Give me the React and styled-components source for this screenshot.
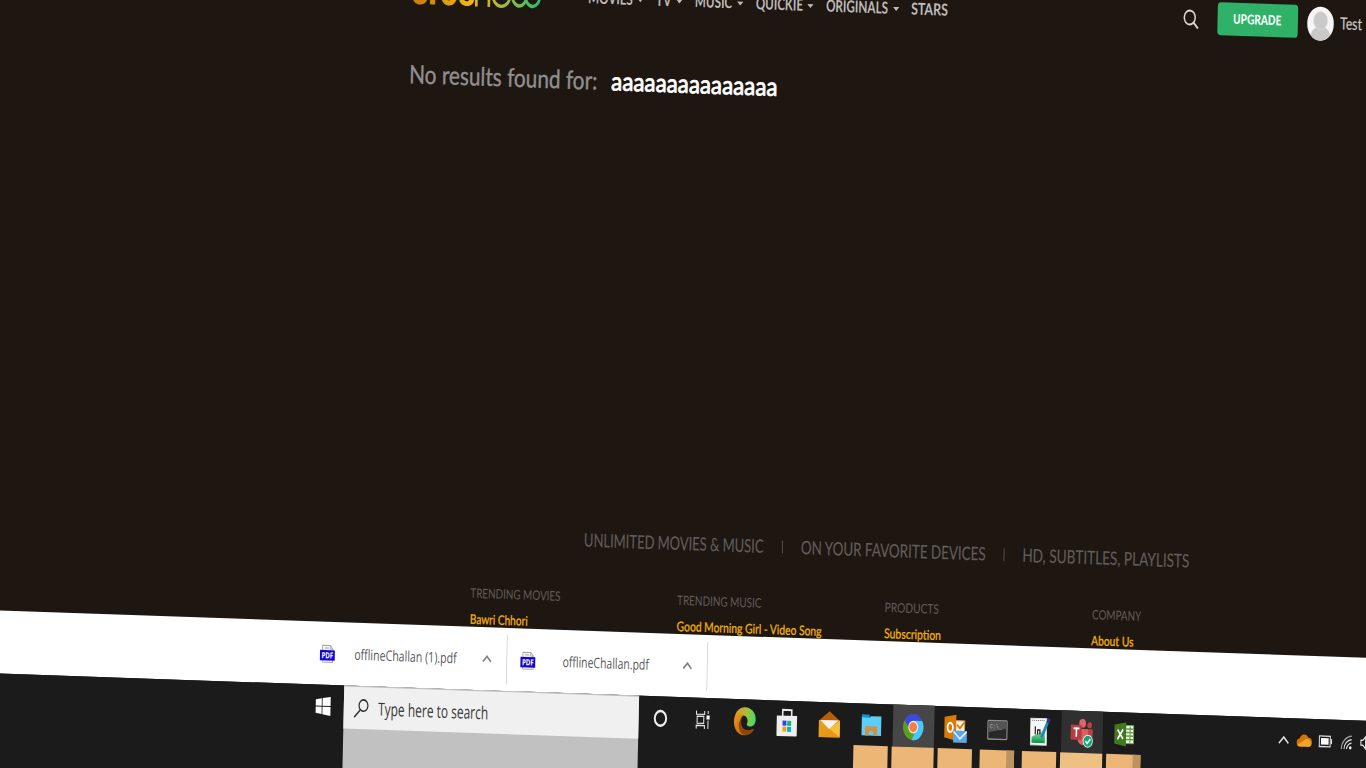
import React, { useLayoutEffect, useRef, useState } from "react";
import styled, { createGlobalStyle } from "styled-components";

const Global = createGlobalStyle`
  html, body { margin: 0; padding: 0; width: 100%; height: 100%; overflow: hidden; background: #1e1611; }
  svg { display: block; flex: none; overflow: visible; }
`;

const Viewport = styled.div`
  width: 1366px;
  height: 768px;
  overflow: hidden;
  background: #1e1611;
`;

const Screen = styled.div`
  width: 1830px;
  height: 850px;
  display: flex;
  flex-direction: column;
  transform-origin: 0 0;
  transform: matrix(0.78, 0.027, -0.022, 1, -18.68, -60.69);
  font-family: Lato, "Liberation Sans", sans-serif;
`;

const Page = styled.main`
  height: 670px;
  flex: none;
  display: flex;
  flex-direction: column;
  overflow: hidden;
  background: #1e1611;
`;

const TextBox = styled.span`
  display: block;
  flex: none;
  width: ${(p) => p.$w}px;
  margin-left: ${(p) => p.$gap || 0}px;
  white-space: nowrap;
`;

const TextRun = styled.span`
  display: inline-block;
  transform-origin: 0 50%;
`;

/* Keeps a label to its column width whatever the installed font measures. */
function Fit({ w, gap, children }) {
  const ref = useRef(null);
  const [scale, setScale] = useState(1);
  useLayoutEffect(() => {
    setScale(w / ref.current.offsetWidth);
  }, [w]);
  return (
    <TextBox $w={w} $gap={gap}>
      <TextRun ref={ref} style={{ transform: `scaleX(${scale})` }}>
        {children}
      </TextRun>
    </TextBox>
  );
}

const Header = styled.header`
  height: 75px;
  flex: none;
  display: flex;
  align-items: center;
  padding-left: 552px;
`;

const Nav = styled.nav`
  display: flex;
  align-items: center;
  width: 763px;
  margin-left: 60px;
  padding-bottom: 2px;
  box-sizing: border-box;
  font-size: 16.5px;
  line-height: 24px;
  font-weight: 700;
  color: #bdbab8;
`;

const Caret = styled.i`
  flex: none;
  margin-left: ${(p) => p.$gap}px;
  margin-top: 2px;
  border: 4px solid transparent;
  border-top-color: #bdbab8;
  border-bottom: 0;
`;

const Upgrade = styled.button`
  display: flex;
  align-items: center;
  justify-content: center;
  width: 103px;
  height: 33.5px;
  margin: -2px 0 0 23.5px;
  padding: 0 0 2px;
  box-sizing: border-box;
  border: 0;
  border-radius: 4px;
  background: #2fb168;
  color: #f4fff8;
  font: 900 13.5px Lato, sans-serif;
`;

const Avatar = styled.div`
  width: 33.5px;
  height: 33.5px;
  margin: 1px 0 0 12.5px;
  border-radius: 50%;
  overflow: hidden;
  background: #f5f5f5;
`;

const UserName = styled.div`
  margin: -1px 0 0 8px;
  font-size: 16.5px;
  color: #c9c6c4;
  -webkit-text-stroke: 0.2px #c9c6c4;
`;

const Results = styled.h1`
  display: flex;
  align-items: center;
  height: 92px;
  margin: 0;
  padding: 0 0 4px 552px;
  box-sizing: border-box;
  font-size: 25.5px;
  line-height: 30px;
  font-weight: 400;
  color: #918f8e;
  -webkit-text-stroke: 0.4px #918f8e;
`;

const Query = styled.span`
  display: block;
  margin-left: 18px;
  color: #fff;
  -webkit-text-stroke: 0.8px #fff;
`;

const Tagline = styled.div`
  display: flex;
  align-items: center;
  height: 40px;
  margin-top: auto;
  padding: 0 0 3px 789px;
  box-sizing: border-box;
  font-size: 18.5px;
  color: #615d5a;
  -webkit-text-stroke: 0.15px #615d5a;
`;

const Bar = styled.i`
  width: 1.5px;
  height: 13px;
  margin-left: ${(p) => p.$gap}px;
  background: #615d5a;
`;

const Columns = styled.div`
  display: grid;
  grid-template-columns: repeat(4, 265.7px);
  height: 47.5px;
  margin-top: 22px;
  padding-left: 644.5px;
  font-size: 13.2px;
`;

const Column = styled.div`
  line-height: 26px;
  color: #615d5a;
`;

const ColumnLink = styled.a`
  display: block;
  color: #f2b10a;
  -webkit-text-stroke: 0.3px #f2b10a;
`;

const Downloads = styled.section`
  display: flex;
  align-items: center;
  height: 63px;
  flex: none;
  padding-left: 437px;
  background: #fff;
  font-family: "Open Sans", "Noto Sans", sans-serif;
  font-size: 14.5px;
  line-height: 24px;
  color: #59595b;
`;

const Download = styled.div`
  display: flex;
  align-items: center;
  box-sizing: border-box;
  width: 257px;
  height: 49px;
  padding-left: 17px;
  border-right: 1.3px solid #cfcfcf;
  & > svg:last-child { margin-left: auto; margin-right: 19px; }
`;

const Taskbar = styled.footer`
  display: flex;
  flex: 1;
  background: #1b1b1b;
`;

const Start = styled.div`
  display: flex;
  align-items: center;
  justify-content: center;
  width: 54px;
  height: 43px;
  margin-left: 432px;
`;

const SearchColumn = styled.div`
  width: 378px;
  background: #c1c1c1;
`;

const SearchBox = styled.div`
  display: flex;
  align-items: center;
  height: 43px;
  box-sizing: border-box;
  padding-left: 13px;
  border-top: 1px solid #bdbdbd;
  background: #f0f0f0;
  font-family: "Open Sans", "Noto Sans", sans-serif;
  font-size: 18px;
  color: #383838;
`;

const Apps = styled.div`
  display: flex;
  margin-left: 1px;
`;

const AppSlot = styled.div`
  width: 54px;
  display: flex;
  flex-direction: column;
  align-items: center;
`;

const AppTile = styled.div`
  display: flex;
  align-items: center;
  justify-content: center;
  width: 53px;
  height: 42px;
  padding-top: 1px;
  box-sizing: border-box;
  background: ${(p) => p.$bg || "transparent"};
`;

const AppBar = styled.div`
  width: ${(p) => (p.$full ? 53.5 : 44.5)}px;
  flex: 1;
  box-sizing: border-box;
  background: ${(p) => p.$bg || "#ebb676"};
  border-right: ${(p) => (p.$stacked ? "10px solid #bd945f" : "0")};
`;

const Tray = styled.div`
  display: flex;
  align-items: center;
  height: 44px;
  margin-left: 164px;
`;

const TrayItem = styled.div`
  width: 27px;
  display: flex;
  justify-content: center;
`;

const Logo = () => (
  <svg width="167" height="50" viewBox="0 0 167 50">
    <defs>
      <linearGradient id="brand" gradientUnits="userSpaceOnUse" x1="0" y1="0" x2="167" y2="0">
        <stop offset="0" stopColor="#c87a08" />
        <stop offset=".45" stopColor="#edb51c" />
        <stop offset=".7" stopColor="#a6b83c" />
        <stop offset="1" stopColor="#27bd75" />
      </linearGradient>
    </defs>
    <g fill="url(#brand)" fontFamily="Inter, sans-serif">
      <text x="0" y="36.5" fontSize="38" fontWeight="800" textLength="82" lengthAdjust="spacingAndGlyphs">eros</text>
    </g>
    <g fill="none" stroke="url(#brand)" strokeWidth="3.4">
      <path d="M84 37V23q0-8 8-8t8 8v14" />
      <circle cx="116" cy="25" r="11" />
      <path d="M130 15v10a9 10 0 0 0 18 0V15M147 15v10a9 10 0 0 0 18 0V15" />
    </g>
  </svg>
);

const SearchIcon = () => (
  <svg width="20" height="20" viewBox="0 0 20 20" fill="none" stroke="#d8d6d4" strokeWidth="1.9">
    <circle cx="8.3" cy="8.3" r="7" />
    <path d="M13.2 13.2 19 19" strokeWidth="2.3" />
  </svg>
);

const Person = () => (
  <svg width="34" height="34" viewBox="0 0 34 34" fill="#c9c9c9">
    <path d="M4 34c0-9 5-13 9-13h8c5 0 9 4 9 13z" />
    <circle cx="17" cy="14" r="9" stroke="#dedede" strokeWidth=".8" />
  </svg>
);

const PdfIcon = () => (
  <svg width="19" height="18" viewBox="0 0 19 18">
    <path d="M3 .6h10l3.5 3.5v13.3H3z" fill="#f4f4f4" stroke="#a6a6a6" />
    <path d="M13 .6v3.6h3.5M6 3.2h5" fill="none" stroke="#a6a6a6" />
    <path d="M0 5.3h19v10.4H0z" fill="#1505d2" />
    <text x="2" y="13.6" fontFamily="Open Sans" fontSize="8.5" fontWeight="700" fill="#fff" textLength="15" lengthAdjust="spacingAndGlyphs">PDF</text>
  </svg>
);

const Chevron = ({ w = 12, h = 7, color = "#858585", sw = 2 }) => (
  <svg width={w} height={h} viewBox="0 0 12 7" fill="none" stroke={color} strokeWidth={sw} preserveAspectRatio="none">
    <path d="m.8 6.4 5.2-5.4 5.2 5.4" />
  </svg>
);

const WindowsIcon = () => (
  <svg width="19" height="19" viewBox="0 0 19 19" fill="#fff">
    <path d="M0 2.7 7.7 1.6V9H0zM8.7 1.4 19 0v9H8.7zM0 10h7.7v7.4L0 16.3zM8.7 10H19v9L8.7 17.6z" />
  </svg>
);

const TaskSearchIcon = () => (
  <svg width="19" height="19" viewBox="0 0 19 19" fill="none" stroke="#2c2c2c" strokeWidth="1.6">
    <circle cx="12.2" cy="6.5" r="5.7" />
    <path d="M8.2 10.8.6 18.4" />
  </svg>
);

const CortanaIcon = () => (
  <svg width="18" height="18" viewBox="0 0 18 18">
    <circle cx="9" cy="9" r="7.3" fill="none" stroke="#ededed" strokeWidth="2.5" />
  </svg>
);

const TaskViewIcon = () => (
  <svg width="19" height="18" viewBox="0 0 19 18" fill="none" stroke="#e6e6e6" strokeWidth="1.3">
    <path d="M1 0v3.4h10.5V0M2 5.5h8.5v7H2zM1 18v-3.4h10.5V18M16 0v3M16 9.5V18" />
    <path d="M14 4.5h4v4h-4z" fill="#fff" stroke="none" />
  </svg>
);

const EdgeIcon = () => (
  <svg width="28" height="28" viewBox="0 0 28 28">
    <defs>
      <linearGradient id="edgeTop" x1="0" x2="1" y1=".3" y2=".5">
        <stop offset="0" stopColor="#f08b20" />
        <stop offset=".5" stopColor="#a8bf35" />
        <stop offset="1" stopColor="#48dc66" />
      </linearGradient>
      <linearGradient id="edgeBase" x1="0" x2="1" y1="0" y2="1">
        <stop offset="0" stopColor="#ef9420" />
        <stop offset="1" stopColor="#b75c04" />
      </linearGradient>
    </defs>
    <path d="M.5 12C2 4 7 0 14 0c8 0 14 5 14 11.500 0 5-3 7.500-7 7.500-3 0-5-1.500-4-3 2-3 0-7-5-8C7 7 3 9 .5 12z" fill="url(#edgeTop)" />
    <path d="M.4 12C3 6 9 5.500 13 8c-3 1-5 4-4 8 1 5 6 8 11 7 3-.5 4.500-2 5.500-1.500C23 26 19 28 14 28 5 28-1 21 .4 12z" fill="url(#edgeBase)" />
    <path d="M11 10c-3 4-2 10 3 12 4 2 8 1 11-.5 1 0 1 1 0 2-4 5-10 5-14 3-6-4-6-13 0-16.500z" fill="#8c4707" />
  </svg>
);

const StoreIcon = () => (
  <svg width="26" height="28" viewBox="0 0 26 28">
    <path d="M7.500 9V1.200h11.500V9" fill="none" stroke="#e8e8e8" strokeWidth="2" />
    <path d="M0 7h26v19.500q0 1-1 1H1q-1 0-1-1z" fill="#eee" />
    <path d="M7.500 12h5v5h-5z" fill="#2849e5" />
    <path d="M13.500 12h5v5h-5z" fill="#13b57c" />
    <path d="M7.500 18h5v5h-5z" fill="#f2a40c" />
    <path d="M13.500 18h5v5h-5z" fill="#0aa7f3" />
  </svg>
);

const MailIcon = () => (
  <svg width="27" height="26" viewBox="0 0 27 26">
    <path d="M0 9.500 13.500 0 27 9.500z" fill="#b65e07" />
    <path d="M0 9h27v17H0z" fill="#e89b1e" />
    <path d="M2 9h23l-11.500 9z" fill="#f3f3f3" />
    <path d="M27 9.500V26L13.500 17.500z" fill="#f7bf3d" />
    <path d="M0 26 13.500 17.500 27 26z" fill="#e59a17" />
  </svg>
);

const FolderIcon = () => (
  <svg width="25" height="21" viewBox="0 0 25 21">
    <path d="M0 0h10v4H0z" fill="#0b97cf" />
    <path d="M0 3h10l1.500-1.500H25V21H0z" fill="#5dcdf9" />
    <path d="M4.500 21v-9.500H20V21h-5v-4.500H9.500V21z" fill="#d6913f" />
  </svg>
);

const ChromeIcon = () => (
  <svg width="26" height="26" viewBox="0 0 26 26">
    <circle cx="13" cy="13" r="13" fill="#5b9f1f" />
    <path d="M1.700 6.500A13 13 0 0 1 24.300 6.500L18 13H7z" fill="#3f48dd" />
    <path d="M24.300 6.500A13 13 0 0 1 11.500 26l6-12-3-7.500z" fill="#49c8ff" />
    <circle cx="13" cy="13" r="6.300" fill="#e9eef5" />
    <circle cx="13" cy="13" r="5" fill="#fa7c41" />
  </svg>
);

const OutlookIcon = () => (
  <svg width="29" height="28" viewBox="0 0 29 28">
    <path d="M14 6h12v13H14z" fill="#f7efe2" stroke="#e19325" />
    <path d="m16 10 4 3.500L26 7" fill="none" stroke="#d67b0a" strokeWidth="2" />
    <path d="M0 2.500 15 0v26L0 23z" fill="#d97a04" />
    <ellipse cx="7.500" cy="13" rx="3.400" ry="4.500" fill="none" stroke="#fff" strokeWidth="2.200" />
    <path d="M11.500 16H29v12H11.500z" fill="#5da5e5" />
    <path d="m12 17 8.200 7 8.300-7" fill="none" stroke="#e5f2fc" strokeWidth="1.700" />
  </svg>
);

const TerminalIcon = () => (
  <svg width="26" height="20" viewBox="0 0 26 20">
    <rect x=".7" y=".7" width="24.600" height="18.600" rx="1" fill="#292929" stroke="#8f8f8f" strokeWidth="1.400" />
    <path d="M1.500 1.500h23v7l-23 4z" fill="#555" />
    <text x="3" y="8.500" fontFamily="Liberation Mono" fontSize="6.500" fill="#bbb">C:\_</text>
  </svg>
);

const NotepadIcon = () => (
  <svg width="25" height="28" viewBox="0 0 25 28">
    <defs>
      <linearGradient id="note" x1="0" x2="0" y1="0" y2="1">
        <stop offset="0" stopColor="#bde7cc" />
        <stop offset="1" stopColor="#00973e" />
      </linearGradient>
    </defs>
    <path d="M.5 1H21v26.500H.5z" fill="#f7f7f5" stroke="#ddd" />
    <path d="M2 19.500 19 12v13.500H2z" fill="url(#note)" />
    <path d="M2 3h17" stroke="#888" strokeDasharray="1.500 1" />
    <path d="M6.500 9v8M9.500 17v-4.500h3V17M15 16.500h2.500" fill="none" stroke="#222" strokeWidth="1.500" />
    <path d="M23 3 14.500 20" stroke="#1d8bb7" strokeWidth="3.400" />
    <path d="m24.500 1-2.200 4" stroke="#2e3474" strokeWidth="3.400" />
  </svg>
);

const TeamsIcon = () => (
  <svg width="28" height="28" viewBox="0 0 28 28">
    <circle cx="15" cy="4.300" r="4.300" fill="#dd686a" />
    <circle cx="24" cy="6" r="3" fill="#be4145" />
    <path d="M20 10h8v8c0 4-3 6-6 6z" fill="#bd4145" />
    <path d="M9 10h13v10c0 8-13 8-13 0z" fill="#dc6063" />
    <path d="M0 6h14v15H0z" fill="#b83c42" />
    <path d="M3.500 9.500h7.500M7.200 9.500V18" stroke="#fff" strokeWidth="2" />
    <circle cx="22" cy="22" r="6" fill="#10a575" stroke="#e3f4ed" strokeWidth="1" />
    <path d="m19 22 2.300 2.300 4-4.500" fill="none" stroke="#fff" strokeWidth="1.800" />
  </svg>
);

const ExcelIcon = () => (
  <svg width="25" height="24" viewBox="0 0 25 24">
    <path d="M13 3h11.500v18H13z" fill="#f5faf0" stroke="#6fa547" />
    <path d="M15 6.500h9M15 10h9M15 13.500h9M15 17h9M20 4v16" stroke="#659b3e" strokeWidth="1.400" />
    <path d="M0 2.500 15 0v24L0 21.500z" fill="#427820" />
    <path d="m4 7.500 7 9M11 7l-7 10" stroke="#fff" strokeWidth="2" />
  </svg>
);

const CloudIcon = () => (
  <svg width="19" height="12" viewBox="0 0 19 12">
    <path d="M4 12a4 4 0 0 1-.5-8A6 6 0 0 1 14.500 3 4.500 4.500 0 0 1 15 12z" fill="#d27307" />
    <path d="M1 10 11 4.500a5 5 0 0 1 7 4c0 2-1 3.500-3 3.500H4q-2 0-3-2z" fill="#efa42a" />
  </svg>
);

const BatteryIcon = () => (
  <svg width="17" height="12" viewBox="0 0 17 12">
    <rect x=".7" y=".7" width="14" height="10.600" fill="none" stroke="#ddd" strokeWidth="1.300" />
    <path d="M2.800 2.800h9.800v6.400H2.800z" fill="#fff" />
    <path d="M15.500 3.500h1.500v5h-1.500z" fill="#ddd" />
  </svg>
);

const WifiIcon = () => (
  <svg width="15" height="14" viewBox="0 0 15 14" fill="none" strokeWidth="1.400">
    <path d="M1 14A14 13 0 0 1 14 1" stroke="#a0a0a0" />
    <path d="M4.500 14A10 9.500 0 0 1 14 4.500M7.700 14A6.500 6.500 0 0 1 14 8" stroke="#d8d8d8" />
    <circle cx="12.500" cy="12.500" r="1.600" fill="#fff" />
  </svg>
);

const SpeakerIcon = () => (
  <svg width="20" height="14" viewBox="0 0 20 14" fill="none" stroke="#e0e0e0" strokeWidth="1.400">
    <path d="M1 4.500h2.500L7 1v12L3.500 9.500H1zM11 4.500q2 2.500 0 5M13.500 2.500q3.500 4.500 0 9" />
  </svg>
);

const NAV = [
  { label: "MOVIES", w: 57, gap: 0, caret: 6 },
  { label: "TV", w: 19.5, gap: 16, caret: 6 },
  { label: "MUSIC", w: 48, gap: 16, caret: 6 },
  { label: "QUICKIE", w: 60.5, gap: 16, caret: 6 },
  { label: "ORIGINALS", w: 80, gap: 16, caret: 6 },
  { label: "STARS", w: 47.5, gap: 15 },
];

const COLUMNS = [
  { title: "TRENDING MOVIES", w: 115, link: "Bawri Chhori", lw: 74.5 },
  { title: "TRENDING MUSIC", w: 108, link: "Good Morning Girl - Video Song", lw: 186 },
  { title: "PRODUCTS", w: 69.5, link: "Subscription", lw: 73 },
  { title: "COMPANY", w: 63, link: "About Us", lw: 54 },
];

const FILES = [
  { name: "offlineChallan (1).pdf", gap: 25, w: 131 },
  { name: "offlineChallan.pdf", gap: 35, w: 111 },
];

const APPS = [
  { id: "cortana", Icon: CortanaIcon },
  { id: "views", Icon: TaskViewIcon },
  { id: "edge", Icon: EdgeIcon },
  { id: "store", Icon: StoreIcon },
  { id: "mail", Icon: MailIcon },
  { id: "files", Icon: FolderIcon, open: true },
  { id: "chrome", Icon: ChromeIcon, open: true, full: true, tile: "#464646" },
  { id: "outlook", Icon: OutlookIcon, open: true },
  { id: "terminal", Icon: TerminalIcon, open: true, stacked: true },
  { id: "notepad", Icon: NotepadIcon, open: true },
  { id: "teams", Icon: TeamsIcon, open: true, full: true, tile: "#303030", bar: "#eec084" },
  { id: "excel", Icon: ExcelIcon, open: true, stacked: true },
];

export default function App() {
  return (
    <Viewport>
      <Global />
      <Screen>
        <Page>
          <Header>
            <Logo />
            <Nav>
              {NAV.map((n) => (
                <React.Fragment key={n.label}>
                  <Fit w={n.w} gap={n.gap}>{n.label}</Fit>
                  {n.caret && <Caret $gap={n.caret} />}
                </React.Fragment>
              ))}
            </Nav>
            <SearchIcon />
            <Upgrade><Fit w={62}>UPGRADE</Fit></Upgrade>
            <Avatar><Person /></Avatar>
            <UserName><Fit w={28.5}>Test</Fit></UserName>
          </Header>
          <Results>
            <Fit w={241}>No results found for:</Fit>
            <Query><Fit w={213}>aaaaaaaaaaaaaaa</Fit></Query>
          </Results>
          <Tagline>
            <Fit w={230}>UNLIMITED MOVIES &amp; MUSIC</Fit>
            <Bar $gap={23.5} />
            <Fit w={237} gap={22.5}>ON YOUR FAVORITE DEVICES</Fit>
            <Bar $gap={23} />
            <Fit w={214} gap={22.5}>HD, SUBTITLES, PLAYLISTS</Fit>
          </Tagline>
          <Columns>
            {COLUMNS.map((c) => (
              <Column key={c.title}>
                <Fit w={c.w}>{c.title}</Fit>
                <ColumnLink><Fit w={c.lw}>{c.link}</Fit></ColumnLink>
              </Column>
            ))}
          </Columns>
        </Page>
        <Downloads>
          {FILES.map((f) => (
            <Download key={f.name}>
              <PdfIcon />
              <Fit w={f.w} gap={f.gap}>{f.name}</Fit>
              <Chevron />
            </Download>
          ))}
        </Downloads>
        <Taskbar>
          <Start><WindowsIcon /></Start>
          <SearchColumn>
            <SearchBox>
              <TaskSearchIcon />
              <Fit w={141.5} gap={12}>Type here to search</Fit>
            </SearchBox>
          </SearchColumn>
          <Apps>
            {APPS.map(({ id, Icon, open, full, tile, stacked, bar }) => (
              <AppSlot key={id}>
                <AppTile $bg={tile}><Icon /></AppTile>
                {open && <AppBar $full={full} $stacked={stacked} $bg={bar} />}
              </AppSlot>
            ))}
          </Apps>
          <Tray>
            <TrayItem><Chevron w={14} h={8} color="#e0e0e0" sw={1.5} /></TrayItem>
            <TrayItem><CloudIcon /></TrayItem>
            <TrayItem><BatteryIcon /></TrayItem>
            <TrayItem><WifiIcon /></TrayItem>
            <TrayItem><SpeakerIcon /></TrayItem>
          </Tray>
        </Taskbar>
      </Screen>
    </Viewport>
  );
}
